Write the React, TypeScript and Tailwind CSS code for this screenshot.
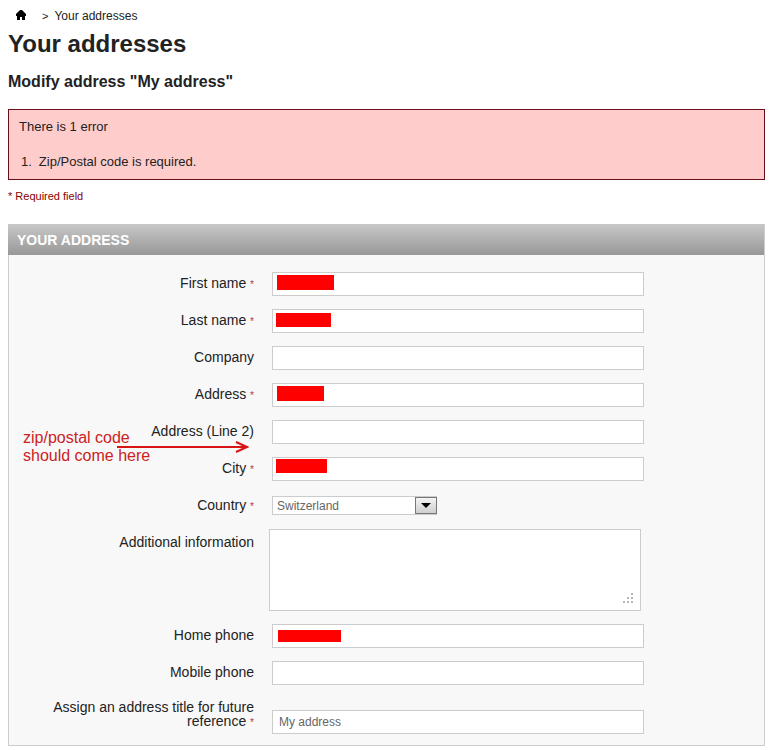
import type { ReactNode } from "react";
import clsx from "clsx";

type TextField = {
  id: string;
  label: string;
  required?: boolean;
  type?: string;
  value?: string;
  mask?: string;
};

const nameFields: TextField[] = [
  { id: "firstname", label: "First name", required: true, mask: "left-[5px] top-[3px] w-[57px] h-[15px]" },
  { id: "lastname", label: "Last name", required: true, mask: "left-1 top-1 w-[55px] h-[14px]" },
  { id: "company", label: "Company" },
  { id: "address1", label: "Address", required: true, mask: "left-[5px] top-[3px] w-[47px] h-[15px]" },
  { id: "address2", label: "Address (Line 2)" },
  { id: "city", label: "City", required: true, mask: "left-1 top-[2px] w-[51px] h-[14px]" },
];

const phoneFields: TextField[] = [
  { id: "phone", label: "Home phone", type: "tel", mask: "left-[6px] top-[6px] w-[63px] h-3" },
  { id: "phone_mobile", label: "Mobile phone", type: "tel" },
];

function Row({
  id,
  label,
  required,
  className = "items-start gap-[18px]",
  labelClassName = "pt-1",
  children,
}: {
  id: string;
  label: string;
  required?: boolean;
  className?: string;
  labelClassName?: string;
  children: ReactNode;
}) {
  return (
    <div className={clsx("relative flex", className)}>
      <label
        htmlFor={id}
        className={clsx("w-[245px] shrink-0 pl-8 text-right text-sm leading-[14px]", labelClassName)}
      >
        {label} {required && <span className="text-[10px] leading-[10px] text-[#b03a3a]">*</span>}
      </label>
      {children}
    </div>
  );
}

function TextInput({ id, type = "text", value, mask }: TextField) {
  return (
    <div className="relative min-w-0 max-w-[372px] flex-1">
      <input
        id={id}
        name={id}
        type={type}
        defaultValue={value}
        className="block h-6 w-full border border-[#ccc] bg-white px-[6px] text-xs text-[#666] outline-none focus:border-[#999]"
      />
      {mask && <span className={clsx("absolute bg-[#f00]", mask)} />}
    </div>
  );
}

function Annotation() {
  return (
    <div className="pointer-events-none absolute left-[14px] top-[9px] text-base leading-[18px] text-[#cc2222]">
      <p className="whitespace-nowrap">
        zip/postal code
        <br />
        should come here
      </p>
      <svg
        className="absolute left-[94px] top-[11px]"
        width="132"
        height="14"
        viewBox="0 0 132 14"
        fill="none"
        stroke="#d81414"
        strokeWidth="2"
      >
        <path d="M0 7H129" />
        <path d="M119 2L130 7L119 12" />
      </svg>
    </div>
  );
}

export default function App() {
  return (
    <main className="bg-white px-2 pt-2 pb-1 font-['Liberation_Sans',Arial,sans-serif] text-[#222]">
      {/* Breadcrumb */}
      <nav className="flex h-4 items-center text-xs">
        <a href="#home" aria-label="Home" className="ml-[7px]">
          <svg className="block" width="12" height="14" viewBox="0 0 12 14" fill="#000">
            <path d="M5 1H7L11 5V7H10V11H7V8H5V11H2V7H1V5Z" />
          </svg>
        </a>
        <span className="ml-[15px] text-[11px]">&gt;</span>
        <span className="ml-[6px] text-[12px]">Your addresses</span>
      </nav>

      <h1 className="mt-1 text-2xl leading-8 font-bold">Your addresses</h1>
      <h2 className="mt-3 text-base leading-5 font-bold">Modify address "My address"</h2>

      {/* Validation errors */}
      <div className="mt-[17px] border border-[#6b0f1a] bg-[#ffcccc] px-[10px] py-2 text-[13px] leading-[18px]">
        <p>There is 1 error</p>
        <ol className="mt-[17px]">
          <li className="flex gap-[7px]">
            <span className="pl-[2px]">1.</span>
            <span>Zip/Postal code is required.</span>
          </li>
        </ol>
      </div>

      <p className="mt-2 text-[11px] leading-4 text-[#880000]">* Required field</p>

      {/* Address form */}
      <form className="mt-5 border border-t-0 border-[#ccc] bg-[#f8f8f8]">
        <h3 className="-ml-px bg-linear-to-b from-[#c8c8c8] to-[#989898] pt-px pl-[9px] text-sm leading-[30px] font-bold text-white">
          YOUR ADDRESS
        </h3>
        <div className="flex flex-col gap-[13px] pt-[17px] pb-[11px]">
          {nameFields.map((field) => (
            <Row key={field.id} id={field.id} label={field.label} required={field.required}>
              <TextInput {...field} />
              {field.id === "address2" && <Annotation />}
            </Row>
          ))}

          <Row id="id_country" label="Country" required className="h-[22px] items-start gap-[18px]">
            <div className="relative mt-[2px] w-[165px]">
              <select
                id="id_country"
                className="block h-[19px] w-full appearance-none border border-[#ccc] bg-white pl-1 text-xs leading-4 text-[#666] outline-none"
              >
                <option>Switzerland</option>
              </select>
              <span className="pointer-events-none absolute top-px right-0 flex h-[17px] w-[22px] items-center justify-center border border-[#777] bg-linear-to-b from-[#f4f4f4] to-[#cfcfcf]">
                <svg width="10" height="5" viewBox="0 0 10 5" fill="#000">
                  <path d="M0 0H10L5 5Z" />
                </svg>
              </span>
            </div>
          </Row>

          <Row
            id="other"
            label="Additional information"
            className="items-start gap-[15px]"
            labelClassName="pt-[6px]"
          >
            <div className="relative min-w-0 max-w-[372px] flex-1">
              <textarea
                id="other"
                name="other"
                className="block h-[82px] w-full resize-none border border-[#ccc] bg-white p-1 text-xs text-[#666] outline-none"
              />
              <svg
                className="pointer-events-none absolute right-2 bottom-2"
                width="10"
                height="10"
                viewBox="0 0 10 10"
                fill="#b5b5b5"
              >
                <path d="M8 0h2v2h-2zM4 4h2v2h-2zM8 4h2v2h-2zM0 8h2v2h-2zM4 8h2v2h-2zM8 8h2v2h-2z" />
              </svg>
            </div>
          </Row>

          {phoneFields.map((field) => (
            <Row key={field.id} id={field.id} label={field.label} required={field.required}>
              <TextInput {...field} />
            </Row>
          ))}

          <Row
            id="alias"
            label="Assign an address title for future reference"
            required
            className="min-h-9 items-end gap-[18px]"
            labelClassName="pb-[6px]"
          >
            <TextInput id="alias" label="Address title" value="My address" />
          </Row>
        </div>
      </form>
    </main>
  );
}
